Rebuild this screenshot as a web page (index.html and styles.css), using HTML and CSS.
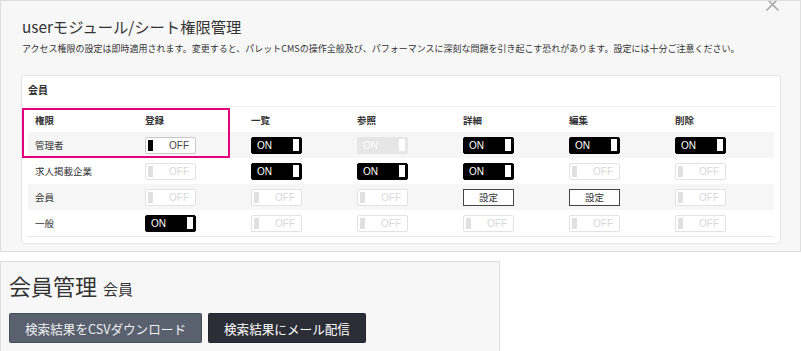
FILE: index.html
```html
<!DOCTYPE html>
<html lang="ja">
<head>
<meta charset="utf-8">
<title>userモジュール/シート権限管理</title>
<link rel="stylesheet" href="styles.css">
</head>
<body>
<div class="modal">
  <svg class="close" width="15" height="15" viewBox="0 0 15 15"><path d="M1.5 1.5 L13.5 13.5 M13.5 1.5 L1.5 13.5" stroke="#a8a8a8" stroke-width="1.6" fill="none"/></svg>
  <h1 class="modal-title">userモジュール/シート権限管理</h1>
  <p class="modal-desc">アクセス権限の設定は即時適用されます。変更すると、パレットCMSの操作全般及び、パフォーマンスに深刻な問題を引き起こす恐れがあります。設定には十分ご注意ください。</p>
  <div class="panel">
    <div class="panel-head">会員</div>
    <div class="perm-table">
      <div class="row head">
        <div class="cell label">権限</div>
        <div class="cell">登録</div>
        <div class="cell">一覧</div>
        <div class="cell">参照</div>
        <div class="cell">詳細</div>
        <div class="cell">編集</div>
        <div class="cell">削除</div>
      </div>
      <div class="row odd">
        <div class="cell label">管理者</div>
        <div class="cell"><span class="tg off"><i></i><b>OFF</b></span></div>
        <div class="cell"><span class="tg on"><b>ON</b><i></i></span></div>
        <div class="cell"><span class="tg on dis"><b>ON</b><i></i></span></div>
        <div class="cell"><span class="tg on"><b>ON</b><i></i></span></div>
        <div class="cell"><span class="tg on"><b>ON</b><i></i></span></div>
        <div class="cell"><span class="tg on"><b>ON</b><i></i></span></div>
      </div>
      <div class="row">
        <div class="cell label">求人掲載企業</div>
        <div class="cell"><span class="tg off dis"><i></i><b>OFF</b></span></div>
        <div class="cell"><span class="tg on"><b>ON</b><i></i></span></div>
        <div class="cell"><span class="tg on"><b>ON</b><i></i></span></div>
        <div class="cell"><span class="tg on"><b>ON</b><i></i></span></div>
        <div class="cell"><span class="tg off dis"><i></i><b>OFF</b></span></div>
        <div class="cell"><span class="tg off dis"><i></i><b>OFF</b></span></div>
      </div>
      <div class="row odd">
        <div class="cell label">会員</div>
        <div class="cell"><span class="tg off dis"><i></i><b>OFF</b></span></div>
        <div class="cell"><span class="tg off dis"><i></i><b>OFF</b></span></div>
        <div class="cell"><span class="tg off dis"><i></i><b>OFF</b></span></div>
        <div class="cell"><span class="setbtn">設定</span></div>
        <div class="cell"><span class="setbtn">設定</span></div>
        <div class="cell"><span class="tg off dis"><i></i><b>OFF</b></span></div>
      </div>
      <div class="row">
        <div class="cell label">一般</div>
        <div class="cell"><span class="tg on"><b>ON</b><i></i></span></div>
        <div class="cell"><span class="tg off dis"><i></i><b>OFF</b></span></div>
        <div class="cell"><span class="tg off dis"><i></i><b>OFF</b></span></div>
        <div class="cell"><span class="tg off dis"><i></i><b>OFF</b></span></div>
        <div class="cell"><span class="tg off dis"><i></i><b>OFF</b></span></div>
        <div class="cell"><span class="tg off dis"><i></i><b>OFF</b></span></div>
      </div>
    </div>
    <div class="highlight"></div>
  </div>
</div>
<div class="page-head">
  <h2 class="page-title">会員管理 <small>会員</small></h2>
  <div class="actions">
    <button class="btn btn-gray">検索結果をCSVダウンロード</button>
    <button class="btn btn-dark">検索結果にメール配信</button>
  </div>
</div>
</body>
</html>
```

FILE: styles.css
```css
* { box-sizing: border-box; }
html, body { margin: 0; padding: 0; background: #fff; }
body {
  font-family: "Noto Sans CJK JP", "Noto Sans", sans-serif;
  color: #333;
}
.modal {
  position: relative;
  width: 801px;
  height: 252px;
  background: #f7f7f7;
  border: 1px solid #dedede;
  padding: 0 19px 0 20px;
  overflow: hidden;
}
.close {
  position: absolute;
  left: 764px;
  top: -4px;
}
.modal-title {
  margin: 15px 0 0 1px;
  font-size: 15.3px;
  line-height: 20px;
  font-weight: normal;
  color: #333;
}
.modal-desc {
  margin: 6px 0 0 1px;
  font-size: 9px;
  line-height: 14px;
  color: #333;
}
.panel {
  position: relative;
  margin-top: 19px;
  background: #fff;
  border: 1px solid #e4e4e4;
  border-radius: 3px;
  padding: 0 6px 6px 6px;
}
.panel-head {
  font-size: 10px;
  font-weight: bold;
  line-height: 20px;
  padding: 4px 0 6px 0;
  color: #333;
}
.perm-table {
  border-top: 1px solid #eeeeee;
  border-bottom: 1px solid #e6e6e6;
}
.row {
  display: grid;
  grid-template-columns: 111px repeat(6, 106px);
  height: 26px;
  align-items: center;
}
.row.head { height: 25px; font-weight: bold; }
.row.odd { background: #f6f6f6; }
.cell {
  font-size: 9.5px;
  padding-left: 6px;
  display: flex;
  align-items: center;
}
.cell.label { padding-left: 7px; }
.row.head .cell { font-size: 9.5px; color: #333; }

.tg {
  width: 51px;
  height: 17px;
  border: 1px solid #000;
  border-radius: 2px;
  display: flex;
  align-items: center;
  justify-content: space-between;
  font-family: "Liberation Sans", Arial, sans-serif;
  font-size: 10px;
}
.tg b { font-weight: normal; }
.tg i { display: block; width: 6px; height: 12px; }
.tg.on { background: #000; color: #fff; padding: 0 2px 0 5px; }
.tg.on i { background: #fff; }
.tg.on.dis { background: #e6e6e6; border-color: #e6e6e6; color: #fff; }
.tg.off { background: #fff; border-color: #c8c8c8; color: #444; padding: 0 6px 0 2px; }
.tg.off i { background: #000; width: 5px; height: 11px; }
.tg.off.dis { border-color: #e2e2e2; color: #d8d8d8; }
.tg.off.dis i { background: #e0e0e0; }

.setbtn {
  width: 51px;
  height: 17px;
  border: 1px solid #444;
  background: #fff;
  display: flex;
  align-items: center;
  justify-content: center;
  font-size: 9.5px;
  color: #333;
}

.highlight {
  position: absolute;
  left: 0;
  top: 32px;
  width: 208px;
  height: 50px;
  border: 2px solid #e2007e;
}

.page-head {
  margin-top: 9px;
  width: 500px;
  height: 90px;
  background: #f7f7f7;
  border: 1px solid #dedede;
  border-bottom: none;
  padding: 0 8px;
}
.page-title {
  display: flex;
  align-items: baseline;
  gap: 6px;
  height: 28px;
  margin: 9px 0 0 0;
  font-size: 22px;
  line-height: 28px;
  font-weight: normal;
  color: #333;
}
.page-title small { font-size: 15px; line-height: 28px; }
.actions {
  display: flex;
  gap: 6px;
  margin-top: 14px;
}
.btn {
  font-family: "Noto Sans CJK JP", sans-serif;
  font-size: 12.6px;
  height: 30px;
  padding: 0 15px;
  border-radius: 2px;
  color: #fff;
  border: 1px solid rgba(0,0,0,0.2);
}
.btn-gray { background: #59616e; color: #eef0f3; }
.btn-dark { background: #2c2e37; }
```
